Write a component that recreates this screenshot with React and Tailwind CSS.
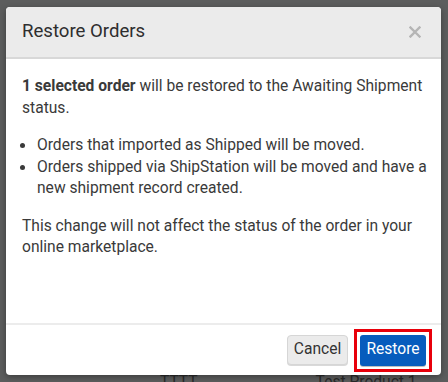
import React from 'react';

const bullets = [
  'Orders that imported as Shipped will be moved.',
  'Orders shipped via ShipStation will be moved and have a new shipment record created.',
];

const App = () => {
  return (
    <div
      className="relative w-[448px] h-[382px] overflow-hidden bg-[#5c5d5d] text-[#333]"
      style={{ fontFamily: 'Roboto, "Liberation Sans", sans-serif' }}
    >
      {/* page behind the overlay */}
      <div className="absolute left-0 top-[371px] flex w-full text-[15.6px] text-[#2a2a2a]">
        <span className="ml-[160px]">TTTT</span>
        <span className="ml-[118px]">Test Product 1</span>
      </div>

      <div className="relative ml-[6px] mt-[7px] flex h-[368px] w-[435px] flex-col overflow-hidden rounded-[4px] bg-white shadow-[0_2px_6px_rgba(0,0,0,0.35)]">
        <div className="flex h-[52px] shrink-0 items-center justify-between border-b-2 border-[#d8d8d8] bg-[#ebebeb] pl-[16px] pr-[20px]">
          <h2 className="text-[18.6px] font-normal text-[#2e2e2e]">Restore Orders</h2>
          <button className="text-[#b5b5b5]">
            <svg width="12" height="12" viewBox="0 0 12 12">
              <path d="M1.5 1.5 L10.5 10.5 M10.5 1.5 L1.5 10.5" stroke="currentColor" strokeWidth="2.4" strokeLinecap="square" />
            </svg>
          </button>
        </div>

        <div className="flex-1 pl-[16px] pr-[10px] pt-[17px] text-[15.6px] leading-[21.5px] text-[#3a3a3a]">
          <p>
            <span className="font-bold">1 selected order</span> will be restored to the Awaiting Shipment status.
          </p>
          <ul className="mt-[16px] -ml-[2px]">
            {bullets.map((b, idx) => (
              <li key={idx} className="flex">
                <span className="flex h-[21.5px] w-[17px] shrink-0 items-center">
                  <span className="block h-[5px] w-[5px] rounded-full bg-[#3a3a3a]" />
                </span>
                <span className="flex-1">{b}</span>
              </li>
            ))}
          </ul>
          <p className="mt-[16px]">
            This change will not affect the status of the order in your online marketplace.
          </p>
        </div>

        <div className="flex h-[52px] shrink-0 items-center justify-end gap-[6px] border-t-2 border-[#ececec] pr-[9px]">
          <button className="h-[30px] w-[61px] rounded-[4px] border border-[#d6d6d6] bg-[#ebebeb] text-[15.6px] text-[#333] shadow-[0_1px_0_rgba(0,0,0,0.15)]">
            Cancel
          </button>
          <div className="border-[3px] border-[#e8000b] p-[3px]">
            <button className="block h-[31px] w-[66px] rounded-[3px] bg-[#075cbd] text-[15.6px] text-white shadow-[0_1px_0_rgba(0,0,0,0.25)]">
              Restore
            </button>
          </div>
        </div>
      </div>
    </div>
  );
};

export default App;
